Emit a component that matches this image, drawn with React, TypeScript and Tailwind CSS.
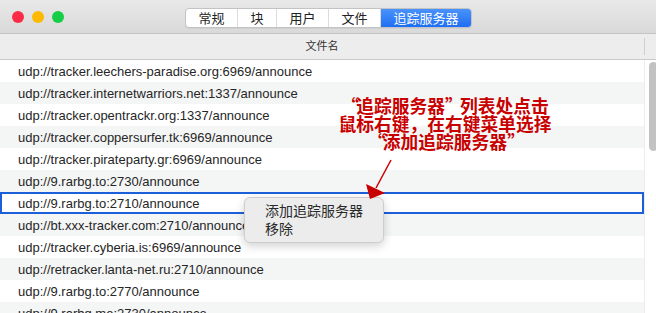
import React from "react";

const rows = [
  "udp://tracker.leechers-paradise.org:6969/announce",
  "udp://tracker.internetwarriors.net:1337/announce",
  "udp://tracker.opentrackr.org:1337/announce",
  "udp://tracker.coppersurfer.tk:6969/announce",
  "udp://tracker.pirateparty.gr:6969/announce",
  "udp://9.rarbg.to:2730/announce",
  "udp://9.rarbg.to:2710/announce",
  "udp://bt.xxx-tracker.com:2710/announce",
  "udp://tracker.cyberia.is:6969/announce",
  "udp://retracker.lanta-net.ru:2710/announce",
  "udp://9.rarbg.to:2770/announce",
  "udp://9.rarbg.me:2730/announce",
];

const tabs = ["常规", "块", "用户", "文件", "追踪服务器"];

function LQ() {
  return <span className="inline-block w-[0.85em] text-center">“</span>;
}
function RQ() {
  return <span className="inline-block w-[0.85em] text-center">”</span>;
}

export default function App() {
  return (
    <div
      className="relative w-[656px] h-[313px] overflow-hidden bg-white flex flex-col text-[#262626]"
      style={{ fontFamily: '"Liberation Sans", "Noto Sans CJK SC", sans-serif' }}
    >
      {/* Title bar */}
      <div className="relative h-[34px] shrink-0 bg-gradient-to-b from-[#e9e9e9] to-[#d9d9d9] border-b border-[#c4c4c4] flex items-center">
        <div className="flex items-center gap-[8px] pl-[12px]">
          <span className="w-[12px] h-[12px] rounded-full bg-[#fb2d46]" />
          <span className="w-[12px] h-[12px] rounded-full bg-[#fdb800]" />
          <span className="w-[12px] h-[12px] rounded-full bg-[#14cf45]" />
        </div>
        <div className="absolute left-[185px] top-[8px] h-[20px] flex rounded-[4px] border border-[#c3c3c3] bg-white overflow-hidden shadow-[0_1px_0_rgba(0,0,0,0.05)]">
          {tabs.map((t, i) => {
            const active = i === tabs.length - 1;
            return (
              <div
                key={t}
                className={
                  active
                    ? "px-[12.5px] flex items-center text-[13px] leading-none text-white bg-gradient-to-b from-[#4a92fb] to-[#1c6ef4]"
                    : "px-[12.5px] flex items-center text-[13px] leading-none text-[#222] border-r border-[#dcdcdc]"
                }
              >
                {t}
              </div>
            );
          })}
        </div>
      </div>

      {/* Column header */}
      <div className="h-[26px] shrink-0 flex bg-[#ededed] border-b border-[#c9c9c9]">
        <div className="w-[644px] flex items-center justify-center text-[11px] text-[#333]">文件名</div>
        <div className="flex items-center">
          <div className="w-px h-[17px] bg-[#cfcfcf]" />
        </div>
      </div>

      {/* Body */}
      <div className="flex flex-1 min-h-0">
        <div className="w-[644px] flex flex-col">
          {rows.map((r, i) => {
            const selected = i === 6;
            const bg = i % 2 === 0 ? "bg-white" : "bg-[#f4f5f5]";
            return (
              <div
                key={i}
                className={
                  selected
                    ? "h-[22px] shrink-0 flex items-center pl-[16px] pt-[1px] text-[13px] bg-white border-2 border-[#1d5fd8]"
                    : `h-[22px] shrink-0 flex items-center pl-[18px] pt-[1px] text-[13px] ${bg}`
                }
              >
                {r}
              </div>
            );
          })}
        </div>
        <div className="w-[12px] border-l border-[#ececec] bg-white pt-[2px] pl-[4px]">
          <div className="w-[9px] h-[89px] rounded-full bg-[#c2c2c2]" />
        </div>
      </div>

      {/* Context menu */}
      <div className="absolute left-[244px] top-[197px] w-[140px] h-[46px] rounded-[6px] bg-[#ececec] border border-[#cdcdcd] shadow-[0_3px_10px_rgba(0,0,0,0.18)] pt-[4px]">
        <div className="h-[18px] pl-[20px] flex items-center text-[14px] text-[#2a2a2a]">添加追踪服务器</div>
        <div className="h-[18px] pl-[20px] flex items-center text-[14px] text-[#2a2a2a]">移除</div>
      </div>

      {/* Annotation */}
      <div
        lang="zh-CN"
        className="absolute left-[325px] top-[96px] w-[240px] text-center text-[17.75px] leading-[18px] font-bold text-[#c80000]"
        style={{ fontFamily: '"Noto Sans CJK SC", sans-serif' }}
      >
        <div>
          <LQ />追踪服务器<RQ />列表处点击
        </div>
        <div>鼠标右键，在右键菜单选择</div>
        <div>
          <LQ />添加追踪服务器<RQ />
        </div>
      </div>
      <svg className="absolute left-0 top-0 pointer-events-none" width="656" height="313">
        <line x1="391" y1="160" x2="376" y2="188" stroke="#c80000" strokeWidth="1.5" />
        <polygon points="366,184 385,193 370,199" fill="#c80000" />
      </svg>
    </div>
  );
}
